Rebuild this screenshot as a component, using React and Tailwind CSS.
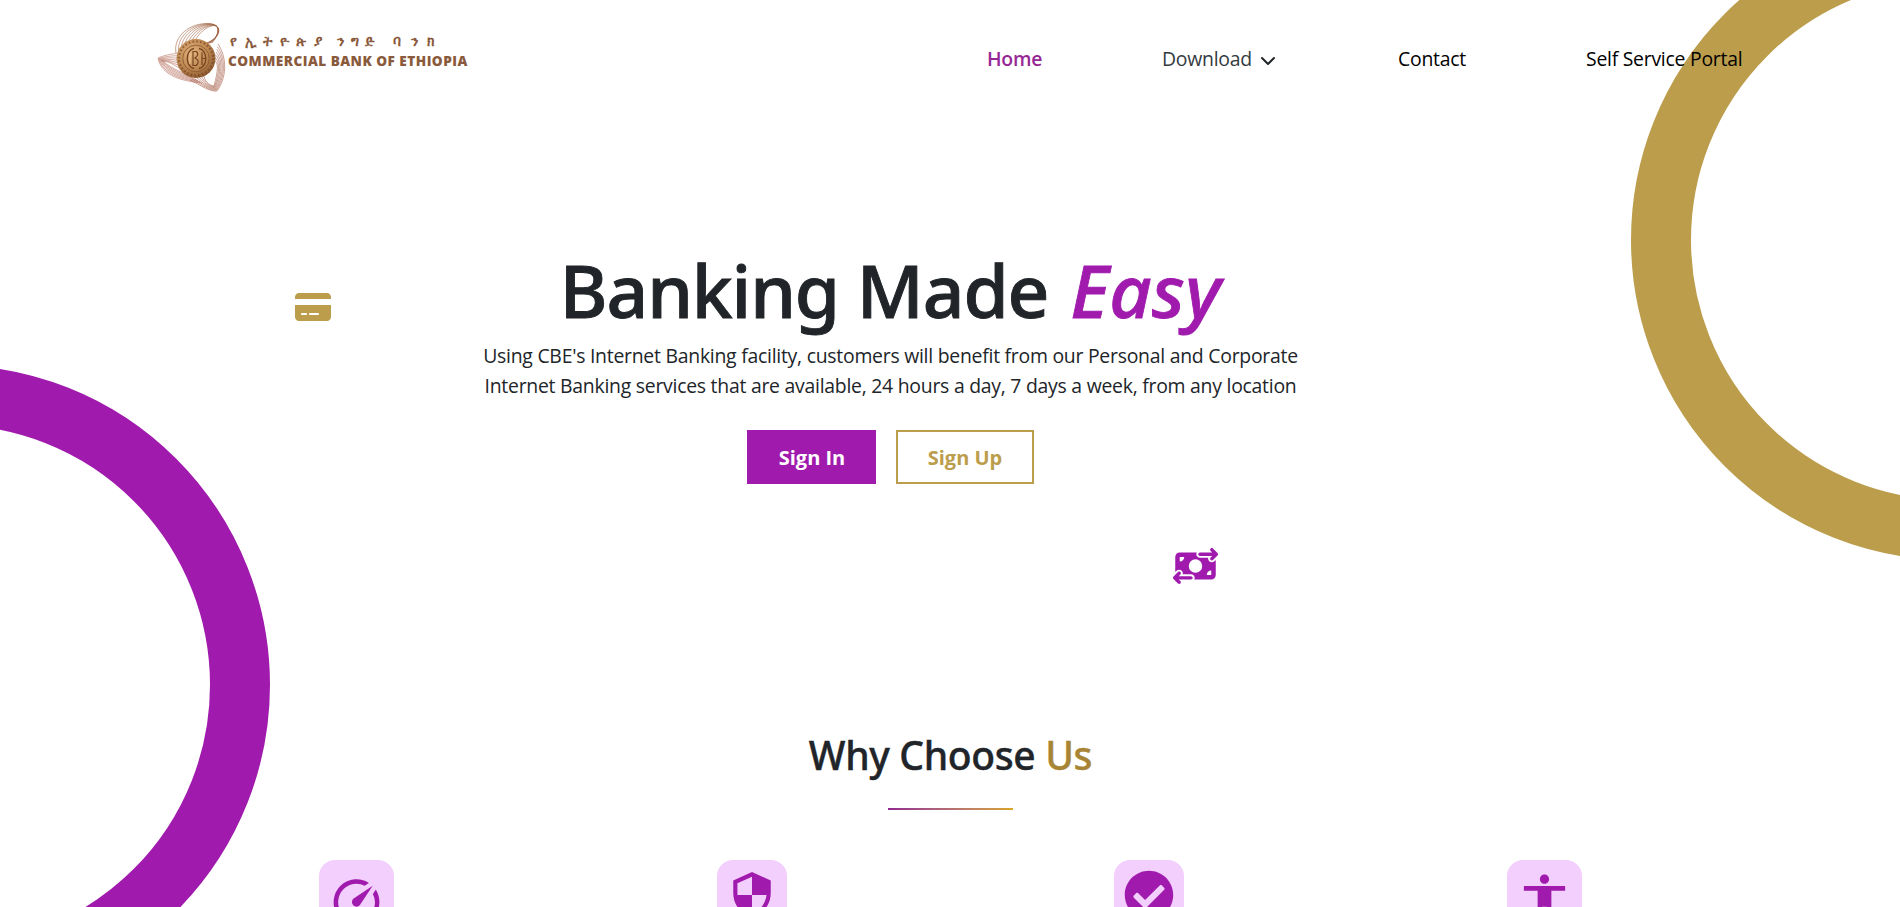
import React from 'react';
import { FaCreditCard, FaMoneyBillTransfer } from 'react-icons/fa6';
import { FaCheckCircle } from 'react-icons/fa';
import { MdSecurity, MdAccessibility } from 'react-icons/md';

const steps = Array.from({ length: 7 }, (_, i) => i / 6);

function Emblem() {
  return (
    <svg viewBox="0 0 76 76" className="-mt-px h-[76px] w-[76px] shrink-0" fill="none">
      <defs>
        <radialGradient id="coin" cx="0.4" cy="0.35" r="0.75">
          <stop offset="0" stopColor="#e3b27c" />
          <stop offset="0.55" stopColor="#bd8750" />
          <stop offset="1" stopColor="#7d4a26" />
        </radialGradient>
      </defs>
      <g stroke="#a06444" strokeWidth="0.7" strokeOpacity="0.85">
        {steps.map((t) => (
          <path
            key={`a${t}`}
            d={`M${20 + t * 16} ${33 - t * 8} C${17 + t * 22} ${16 + t * 4} ${34 + t * 12} ${3 + t * 4} ${52 + t * 6} ${3.5 + t * 2} C${68 - t * 2} ${4 + t * 2} ${66 - t * 6} ${18 + t} ${48 + t * 8} ${24 - t}`}
          />
        ))}
      </g>
      <g stroke="#b56d5c" strokeWidth="0.7" strokeOpacity="0.85">
        {steps.map((t) => (
          <path
            key={`b${t}`}
            d={`M${24 + t} ${33 + t * 16} C${14 + t * 2} ${34 + t * 10} ${6 + t * 8} ${36 + t * 6} ${2 + t * 5} ${38 + t * 3} C${4 + t * 8} ${48 - t * 2} ${12 + t * 10} ${60 - t * 9} ${46 - t * 12} ${63 - t * 7}`}
          />
        ))}
      </g>
      <g stroke="#a8624e" strokeWidth="0.7" strokeOpacity="0.85">
        {steps.map((t) => (
          <path
            key={`c${t}`}
            d={`M${62 - t * 4} ${24 + t * 16} C${69 - t * 6} ${34 + t * 9} ${73 - t * 11} ${54 - t * 3} ${61 - t * 3} ${71 - t * 5} C${54 - t * 2} ${72 - t * 7} ${46 + t * 3} ${66 - t * 5} ${34 + t * 14} ${60 - t * 4}`}
          />
        ))}
      </g>
      <circle cx="40" cy="38.500" r="19.500" fill="url(#coin)" />
      <circle cx="40" cy="38.500" r="17" stroke="#6f4021" strokeWidth="2.200" strokeDasharray="1.600 2.200" strokeOpacity="0.6" />
      <circle cx="40" cy="38.500" r="13.300" stroke="#8d5a30" strokeWidth="0.9" />
      <path d="M38 28.500 C29 30 29 47 38 48.500 M43 28.500 C52 30 52 47 43 48.500" stroke="#754520" strokeWidth="1.300" />
      <path d="M37 31 V46 M37 31.500 H40.500 Q43.500 35 39 38 Q45 41 40 45.500 H37 M46 32.500 V45 M46 38.500 H49" stroke="#754520" strokeWidth="1.200" />
      <path d="M34 33 V44" stroke="#f0c896" strokeWidth="1" />
    </svg>
  );
}

function Logo() {
  return (
    <div className="flex items-start pt-[1px]">
      <Emblem />
      <div className="-ml-[5px] flex flex-col pt-[11px] text-[#8a5a3c]">
        <div className="flex pl-[3px] text-[14px] leading-[18px] font-bold whitespace-nowrap font-['Open_Sans',sans-serif]">
          <span className="w-[107px] tracking-[7.5px]">የኢትዮጵያ</span>
          <span className="w-[56px] tracking-[6.500px]">ንግድ</span>
          <span className="tracking-[9.5px]">ባንክ</span>
        </div>
        <div className="mt-px pl-[1px] text-[13.6px] leading-[20px] font-extrabold tracking-[0.47px] whitespace-nowrap font-['Open_Sans',sans-serif]">
          COMMERCIAL BANK OF ETHIOPIA
        </div>
      </div>
    </div>
  );
}

function Header() {
  return (
    <header className="relative z-10 flex h-[116px] items-center justify-between pr-[157px] pl-[156px]">
      <Logo />
      <nav className="flex items-center gap-[120px] pt-[2px] text-[19.4px] leading-[30px] tracking-[-0.25px] whitespace-nowrap text-black">
        <a className="w-[55px] font-semibold text-[#962795]">Home</a>
        <a className="flex w-[116px] items-center text-[#343a40]">
          Download
          <svg viewBox="0 0 16 10" className="mt-1 ml-2 h-[10px] w-4 shrink-0" fill="none">
            <path d="M2 2 L8 8 L14 2" stroke="#212529" strokeWidth="2" strokeLinecap="round" strokeLinejoin="round" />
          </svg>
        </a>
        <a className="w-[68px]">Contact</a>
        <a className="w-[157px]">Self Service Portal</a>
      </nav>
    </header>
  );
}

function Hero() {
  return (
    <section className="relative z-10 ml-[475px] flex w-[831px] flex-col items-center pt-[129px]">
      <h1 className="text-[73px] leading-[90px] font-medium tracking-[-1.1px] whitespace-nowrap font-['Noto_Sans',sans-serif] [-webkit-text-stroke:0.9px_currentColor]">
        Banking Made <em className="ml-[4px] text-[73.5px] tracking-[0.5px] text-[#a01bad]">Easy</em>
      </h1>
      <p className="mt-[6px] text-center text-[19.4px] leading-[30px] tracking-[-0.25px] whitespace-nowrap">
        Using CBE's Internet Banking facility, customers will benefit from our Personal and Corporate
        <br />
        Internet Banking services that are available, 24 hours a day, 7 days a week, from any location
      </p>
      <div className="mt-[29px] flex gap-5 text-[20px] leading-[30px] font-bold">
        <button className="flex h-[54px] w-[129px] items-center justify-center bg-[#a01bad] pt-[2px] pl-px text-white">Sign In</button>
        <button className="flex h-[54px] w-[138px] items-center justify-center border-2 border-[#bc9d4c] pt-[2px] text-[#bc9d4c]">
          Sign Up
        </button>
      </div>
    </section>
  );
}

function SpeedIcon() {
  return (
    <svg viewBox="0 0 24 24" className="h-[55px] w-[55px]" fill="currentColor">
      <path d="m20.380 8.570-1.230 1.850a8 8 0 0 1-.220 7.580H5.070A8 8 0 0 1 15.580 6.850l1.850-1.230A10 10 0 0 0 3.350 19a2 2 0 0 0 1.720 1h13.850a2 2 0 0 0 1.740-1 10 10 0 0 0-.270-10.440z" />
      <path d="M10.590 15.410a2 2 0 0 0 2.830 0l5.660-8.490-8.490 5.660a2 2 0 0 0 0 2.830z" />
    </svg>
  );
}

function Tile({ children }) {
  return <div className="rounded-2xl bg-[#f3cffd] p-[10px] text-[#a01bad]">{children}</div>;
}

function WhyChooseUs() {
  return (
    <section className="relative z-10 flex flex-col items-center pt-[247px]">
      <h2 className="ml-px text-[39px] leading-[48px] font-medium tracking-[-0.35px] whitespace-nowrap font-['Noto_Sans',sans-serif] [-webkit-text-stroke:0.4px_currentColor]">
        Why Choose <span className="text-[#a88534]">Us</span>
      </h2>
      <div className="mt-[29px] ml-px h-[2px] w-[125px] bg-linear-to-r from-[#92278f] to-[#daa520]" />
      <div className="mt-[50px] ml-px grid w-[1585px] grid-cols-4 justify-items-center">
        <Tile>
          <SpeedIcon />
        </Tile>
        <Tile>
          <MdSecurity size={50} />
        </Tile>
        <Tile>
          <FaCheckCircle size={50} />
        </Tile>
        <Tile>
          <MdAccessibility size={55} />
        </Tile>
      </div>
    </section>
  );
}

export default function App() {
  return (
    <div className="relative h-[907px] w-full overflow-hidden bg-white text-[#212529] font-['Open_Sans',sans-serif]">
      <div className="absolute top-[-80px] left-[1631px] h-[640px] w-[640px] rounded-full border-[60px] border-[#bc9d4c]" />
      <div className="absolute top-[365px] left-[-370px] h-[640px] w-[640px] rounded-full border-[60px] border-[#a01bad]" />
      <FaCreditCard size={32} className="absolute top-[291px] left-[295px] h-8 w-9 text-[#bc9d4c]" />
      <FaMoneyBillTransfer size={36} className="absolute top-[548px] left-[1173px] h-9 w-[45px] text-[#a01bad]" />
      <Header />
      <Hero />
      <WhyChooseUs />
    </div>
  );
}
